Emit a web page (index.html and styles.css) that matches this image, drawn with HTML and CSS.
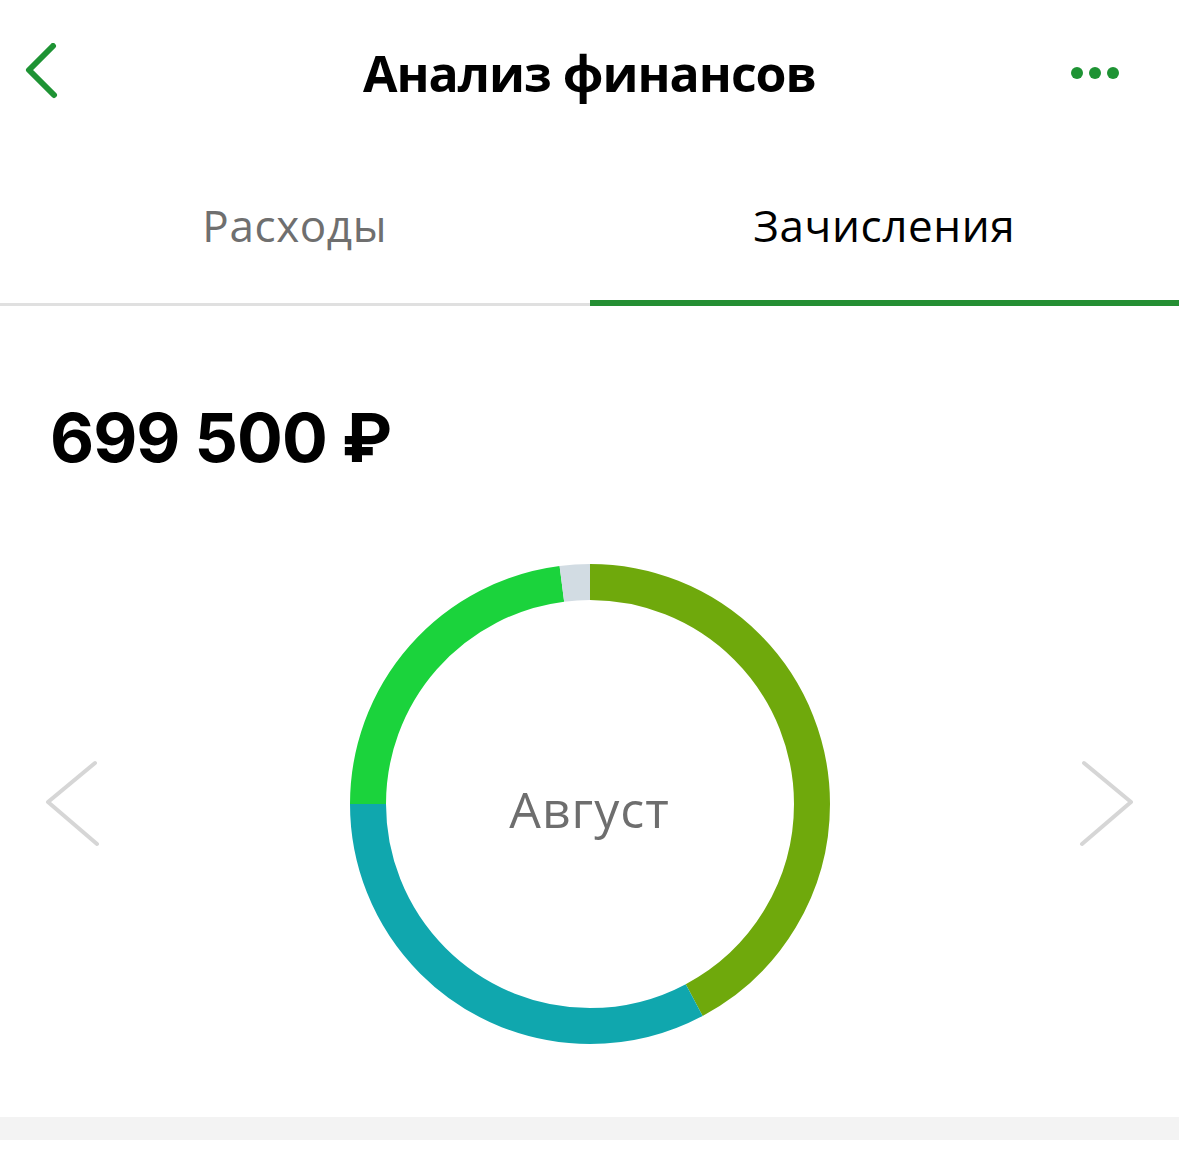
FILE: index.html
```html
<!DOCTYPE html>
<html lang="ru">
<head>
    <meta charset="UTF-8">
    <meta name="viewport" content="width=device-width, initial-scale=1.0">
    <title>Анализ финансов</title>
    <link rel="stylesheet" href="styles.css">
</head>
<body>

<div class="header">
    <svg class="back-icon" width="40" height="60" viewBox="0 0 40 60">
        <path d="M29 3 L5 27 L30 52" />
    </svg>
    <h1>Анализ финансов</h1>
    <svg class="more-icon" width="50" height="14" viewBox="0 0 50 14">
        <circle cx="7" cy="7" r="6" />
        <circle cx="25" cy="7" r="6" />
        <circle cx="43" cy="7" r="6" />
    </svg>
</div>

<div class="tabs">
    <div class="tab">Расходы</div>
    <div class="tab active">Зачисления</div>
</div>

<div class="total">699 500 ₽</div>

<div class="chart-row">
    <svg class="nav-arrow" width="60" height="90" viewBox="0 0 60 90">
        <path d="M53 4 L6 43 L55 85" />
    </svg>

    <div class="donut">
        <svg width="480" height="480" viewBox="0 0 480 480">
            <g transform="rotate(-90 240 240)" fill="none" stroke-width="36">
                <!-- segments in degrees, clockwise from the top -->
                <circle cx="240" cy="240" r="222" pathLength="360" stroke="#6fa90c" stroke-dasharray="152 360" stroke-dashoffset="0" />
                <circle cx="240" cy="240" r="222" pathLength="360" stroke="#10a7ae" stroke-dasharray="118 360" stroke-dashoffset="-152" />
                <circle cx="240" cy="240" r="222" pathLength="360" stroke="#1bd33c" stroke-dasharray="82.7 360" stroke-dashoffset="-270" />
                <circle cx="240" cy="240" r="222" pathLength="360" stroke="#d2dce3" stroke-dasharray="7.3 360" stroke-dashoffset="-352.7" />
            </g>
        </svg>
        <div class="donut-label">Август</div>
    </div>

    <svg class="nav-arrow" width="60" height="90" viewBox="0 0 60 90">
        <path d="M7 4 L54 43 L5 85" />
    </svg>
</div>

<div class="divider"></div>

</body>
</html>
```

FILE: styles.css
```css
body {
    font-family: "Open Sans", "Noto Sans", sans-serif;
    background-color: #ffffff;
    color: #000000;
    margin: 0;
    padding: 0;
}
.header {
    height: 146px;
    padding: 0 24px;
    display: grid;
    grid-template-columns: 1fr auto 1fr;
    align-items: center;
}
.header h1 {
    margin: 0;
    font-size: 50px;
    font-weight: 700;
    letter-spacing: -1px;
}
.back-icon path {
    fill: none;
    stroke: #1e9334;
    stroke-width: 6;
    stroke-linecap: round;
    stroke-linejoin: round;
}
.more-icon {
    justify-self: end;
    margin-right: 35px;
    fill: #1e9334;
}
.tabs {
    display: flex;
}
.tab {
    flex: 1;
    height: 160px;
    box-sizing: border-box;
    display: flex;
    align-items: center;
    justify-content: center;
    font-size: 44px;
    letter-spacing: 0.6px;
    color: #6f6f6f;
    border-bottom: 3px solid #e0e0e0;
}
.tab.active {
    color: #000000;
    border-bottom: 6px solid #258f33;
    padding-top: 3px;
}
.total {
    margin-top: 97px;
    padding-left: 50px;
    font-family: Inter, "Open Sans", sans-serif;
    font-size: 68px;
    font-weight: 700;
    line-height: 1;
    letter-spacing: -1px;
}
.chart-row {
    margin-top: 93px;
    padding: 0 42px;
    display: flex;
    align-items: center;
    justify-content: space-between;
}
.nav-arrow path {
    fill: none;
    stroke: #d6d6d6;
    stroke-width: 4;
    stroke-linecap: round;
    stroke-linejoin: round;
}
.donut {
    display: grid;
    place-items: center;
}
.donut svg,
.donut-label {
    grid-area: 1 / 1;
}
.donut svg {
    display: block;
}
.donut-label {
    font-size: 50px;
    letter-spacing: 1px;
    color: #6e6e6e;
    padding-top: 10px;
}
.divider {
    margin-top: 73px;
    height: 23px;
    background-color: #f3f3f3;
}
```
